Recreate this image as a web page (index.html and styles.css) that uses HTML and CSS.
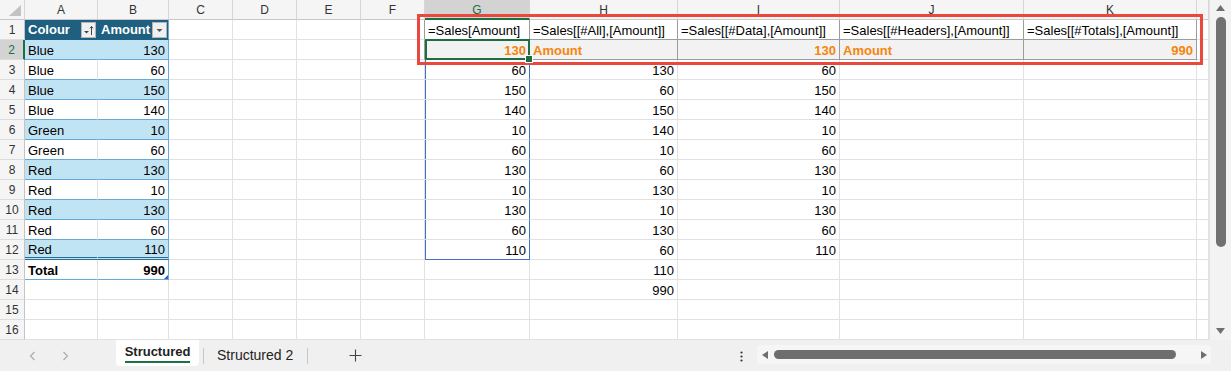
FILE: index.html
```html
<html lang="en">
<head>
  <meta charset="UTF-8" />
  <title>Structured references</title>
  <link rel="stylesheet" href="styles.css">
</head>
<body>
  <div class="app">
    <div class="main">
      <div class="sheet">
        <div class="grid">
          <!-- column headers -->
          <div class="ch corner"></div><div class="ch">A</div><div class="ch">B</div><div class="ch">C</div><div class="ch">D</div><div class="ch">E</div><div class="ch">F</div><div class="ch sel-col">G</div><div class="ch">H</div><div class="ch">I</div><div class="ch">J</div><div class="ch">K</div><div class="ch"></div>

          <div class="rh">1</div>
          <div class="th ca">Colour<span class="fbtn"><svg width="13" height="14" viewBox="0 0 13 14"><path d="M2 8h5l-2.5 2.5z" fill="#444"/><path d="M9.5 12V3.5M7.8 5.3l1.7-1.8 1.7 1.8" stroke="#444" stroke-width="1" fill="none"/></svg></span></div>
          <div class="th cb">Amount<span class="fbtn"><svg width="13" height="14" viewBox="0 0 13 14"><path d="M3.5 6h6l-3 3z" fill="#555"/></svg></span></div>
          <div></div><div></div><div></div><div class="fx-l"></div>
          <div class="fx">=Sales[Amount]</div><div class="fx">=Sales[[#All],[Amount]]</div><div class="fx">=Sales[[#Data],[Amount]]</div><div class="fx">=Sales[[#Headers],[Amount]]</div><div class="fx">=Sales[[#Totals],[Amount]]</div><div></div>

          <div class="rh sel-row">2</div>
          <div class="tb ca band">Blue</div><div class="tb cb band num">130</div>
          <div></div><div></div><div></div><div class="fx-l"></div>
          <div class="fx fx2 out num sel">130</div><div class="fx fx2 out">Amount</div><div class="fx fx2 out num">130</div><div class="fx fx2 out">Amount</div><div class="fx fx2 out num">990</div><div></div>

          <div class="rh">3</div>
          <div class="tb ca">Blue</div><div class="tb cb num">60</div>
          <div></div><div></div><div></div><div></div>
          <div class="spill num">60</div><div class="num">130</div><div class="num">60</div><div></div><div></div><div></div>

          <div class="rh">4</div>
          <div class="tb ca band">Blue</div><div class="tb cb band num">150</div>
          <div></div><div></div><div></div><div></div>
          <div class="spill num">150</div><div class="num">60</div><div class="num">150</div><div></div><div></div><div></div>

          <div class="rh">5</div>
          <div class="tb ca">Blue</div><div class="tb cb num">140</div>
          <div></div><div></div><div></div><div></div>
          <div class="spill num">140</div><div class="num">150</div><div class="num">140</div><div></div><div></div><div></div>

          <div class="rh">6</div>
          <div class="tb ca band">Green</div><div class="tb cb band num">10</div>
          <div></div><div></div><div></div><div></div>
          <div class="spill num">10</div><div class="num">140</div><div class="num">10</div><div></div><div></div><div></div>

          <div class="rh">7</div>
          <div class="tb ca">Green</div><div class="tb cb num">60</div>
          <div></div><div></div><div></div><div></div>
          <div class="spill num">60</div><div class="num">10</div><div class="num">60</div><div></div><div></div><div></div>

          <div class="rh">8</div>
          <div class="tb ca band">Red</div><div class="tb cb band num">130</div>
          <div></div><div></div><div></div><div></div>
          <div class="spill num">130</div><div class="num">60</div><div class="num">130</div><div></div><div></div><div></div>

          <div class="rh">9</div>
          <div class="tb ca">Red</div><div class="tb cb num">10</div>
          <div></div><div></div><div></div><div></div>
          <div class="spill num">10</div><div class="num">130</div><div class="num">10</div><div></div><div></div><div></div>

          <div class="rh">10</div>
          <div class="tb ca band">Red</div><div class="tb cb band num">130</div>
          <div></div><div></div><div></div><div></div>
          <div class="spill num">130</div><div class="num">10</div><div class="num">130</div><div></div><div></div><div></div>

          <div class="rh">11</div>
          <div class="tb ca">Red</div><div class="tb cb num">60</div>
          <div></div><div></div><div></div><div></div>
          <div class="spill num">60</div><div class="num">130</div><div class="num">60</div><div></div><div></div><div></div>

          <div class="rh">12</div>
          <div class="tb ca band last">Red</div><div class="tb cb band num last">110</div>
          <div></div><div></div><div></div><div></div>
          <div class="spill spill-end num">110</div><div class="num">60</div><div class="num">110</div><div></div><div></div><div></div>

          <div class="rh">13</div>
          <div class="tot ca">Total</div><div class="tot cb num grip">990</div>
          <div></div><div></div><div></div><div></div>
          <div></div><div class="num">110</div><div></div><div></div><div></div><div></div>

          <div class="rh">14</div>
          <div></div><div></div><div></div><div></div><div></div><div></div>
          <div></div><div class="num">990</div><div></div><div></div><div></div><div></div>

          <div class="rh">15</div>
          <div></div><div></div><div></div><div></div><div></div><div></div>
          <div></div><div></div><div></div><div></div><div></div><div></div>

          <div class="rh">16</div>
          <div></div><div></div><div></div><div></div><div></div><div></div>
          <div></div><div></div><div></div><div></div><div></div><div></div>
        </div>
        <div class="callout"></div>
      </div>

      <div class="vscroll">
        <svg width="9" height="6" viewBox="0 0 9 6"><path d="M0 6L4.5 0 9 6z" fill="#6f6f6f"/></svg>
        <div class="vthumb"></div>
        <div class="grow"></div>
        <svg width="9" height="6" viewBox="0 0 9 6"><path d="M0 0L4.5 6 9 0z" fill="#6f6f6f"/></svg>
      </div>
    </div>

    <div class="tabbar">
      <div class="nav">
        <svg width="7" height="10" viewBox="0 0 7 10"><path d="M5.5 1L1.5 5l4 4" stroke="#a9a9a9" stroke-width="1.1" fill="none"/></svg>
        <svg width="7" height="10" viewBox="0 0 7 10"><path d="M1.5 1l4 4-4 4" stroke="#a9a9a9" stroke-width="1.1" fill="none"/></svg>
      </div>
      <div class="tab active"><span>Structured</span></div>
      <div class="sep"></div>
      <div class="tab">Structured 2</div>
      <div class="sep sep-end"></div>
      <svg class="plus" width="13" height="13" viewBox="0 0 13 13"><path d="M6.5 0.5v12M0.5 6.5h12" stroke="#444" stroke-width="1.1"/></svg>
      <div class="grow"></div>
      <svg class="dots" width="3" height="11" viewBox="0 0 3 11"><circle cx="1.5" cy="1.5" r="1.1" fill="#333"/><circle cx="1.5" cy="5.5" r="1.1" fill="#333"/><circle cx="1.5" cy="9.5" r="1.1" fill="#333"/></svg>
      <div class="hscroll">
        <svg class="harrow-l" width="6" height="8" viewBox="0 0 6 8"><path d="M6 0L0 4l6 4z" fill="#6f6f6f"/></svg>
        <div class="hthumb"></div>
        <svg class="harrow-r" width="6" height="8" viewBox="0 0 6 8"><path d="M0 0l6 4-6 4z" fill="#6f6f6f"/></svg>
      </div>
    </div>
  </div>
</body>
</html>
```

FILE: styles.css
```css
* { box-sizing:border-box; }
body { margin:0; width:1231px; height:371px; overflow:hidden; background:#fff; font-family:"Liberation Sans", Arial, sans-serif; }
.app { display:flex; flex-direction:column; height:371px; }
.main { display:flex; height:340px; }
.sheet { position:relative; width:1209px; height:340px; overflow:hidden; }
.grow { flex:1; }

/* grid of cells */
.grid {
  display:grid;
  grid-template-columns: 25px 73px 71px 64px 64px 64px 64px 105px 148px 162px 184px 173px 12px;
  grid-auto-rows:20px;
}
.grid > div {
  border-right:1px solid #e1e1e1; border-bottom:1px solid #e1e1e1;
  padding:0 3px; font-size:13px; line-height:21px; white-space:nowrap; color:#000;
}
.grid > .num { text-align:right; }

.grid > .ch, .grid > .rh {
  background:#f5f5f5; color:#333; font-size:12px; text-align:center; padding:0;
  border-right-color:#d6d6d6; border-bottom-color:#c8c8c8;
}
.grid > .rh { border-right-color:#c4c4c4; border-bottom-color:#dcdcdc; }
.grid > .corner { position:relative; }
.corner::after {
  content:""; position:absolute; right:3px; bottom:3px;
  border-left:12px solid transparent; border-bottom:11px solid #c2c2c2;
}
.grid > .sel-col { background:#d3d3d3; color:#1e6e42; border-bottom:2px solid #1e6e42; }
.grid > .sel-row { background:#d3d3d3; color:#1e6e42; border-right:2px solid #1e6e42; }

/* the Sales table */
.grid > .th {
  background:#1f5f7f; color:#fff; font-weight:bold;
  display:flex; justify-content:space-between; align-items:center;
  border-right-color:#1f5f7f; border-bottom-color:#1f5f7f; padding-right:1px;
}
.fbtn {
  width:15px; height:16px; background:#eef0f1; border:1px solid #b5b5b5;
  display:flex; align-items:center; justify-content:center;
}
.grid > .tb { border-bottom-color:#66aadb; }
.grid > .band { background:#c1e4f5; }
.grid > .band.ca { border-right-color:#c1e4f5; }
.grid > .cb { border-right-color:#66aadb; }
.grid > .last { border-bottom:3px double #2b6d90; line-height:19px; }
.grid > .tot { font-weight:bold; border-bottom-color:#66aadb; }
.grid > .grip { position:relative; }
.grip::after {
  content:""; position:absolute; right:0; bottom:0;
  border-left:4px solid transparent; border-bottom:4px solid #3a56c9;
}

/* formula block G1:K2 */
.grid > .fx { border-right-color:#9c9c9c; border-bottom-color:#9c9c9c; }
.grid > .fx-l { border-right-color:#9c9c9c; }
.grid > .fx2 { background:#f2f2f2; }
.grid > .out { color:#f5850c; font-weight:bold; }
.grid > .sel { position:relative; }
.sel::after {
  content:""; position:absolute; left:0; top:-1px; right:-1px; bottom:-1px;
  border:2px solid #1e6e42; z-index:2;
}
.sel::before {
  content:""; position:absolute; right:-4px; bottom:-4px; width:6px; height:6px;
  background:#1e6e42; border:1px solid #fff; z-index:3;
}
.grid > .spill { box-shadow:inset 1px 0 0 #4070c8; border-right-color:#4070c8; }
.grid > .spill-end { border-bottom-color:#4070c8; }

.callout {
  position:absolute; left:417px; top:14px; width:786px; height:51px;
  border:3px solid #e8483e; pointer-events:none;
}

/* scrollbars */
.vscroll {
  width:22px; height:340px; background:#f3f3f3; border-left:1px solid #e3e3e3;
  display:flex; flex-direction:column; align-items:center; padding:5px 0 6px;
}
.vthumb { width:10px; height:230px; margin-top:6px; border-radius:5px; background:#717171; }

.tabbar {
  height:31px; background:#f0f0f0; display:flex; align-items:flex-start;
  font-family:"Liberation Sans", Arial, sans-serif; color:#222;
}
.nav { width:116px; display:flex; gap:26px; padding:11px 0 0 29px; }
.tab { font-size:14px; line-height:16px; padding-top:7px; margin-left:13px; }
.tab.active {
  margin-left:0; width:83px; height:26px; background:#fff; border-radius:0 0 4px 4px;
  font-size:13px; font-weight:bold; text-align:center; padding-top:4px;
}
.tab.active span { display:inline-block; border-bottom:2px solid #1e7145; padding-bottom:1px; }
.sep { width:1px; height:16px; background:#c8c8c8; margin:8px 0 0 4px; }
.sep-end { margin-left:14px; }
.plus { margin:9px 0 0 41px; }
.dots { margin-top:11px; }
.hscroll {
  width:454px; height:19px; margin:5px 20px 0 14px; background:#f6f6f6; border-radius:4px;
  display:flex; align-items:center;
}
.harrow-l { margin-left:5px; }
.hthumb { width:402px; height:9px; margin-left:6px; border-radius:5px; background:#6e6e6e; }
.harrow-r { margin-left:25px; }
```
